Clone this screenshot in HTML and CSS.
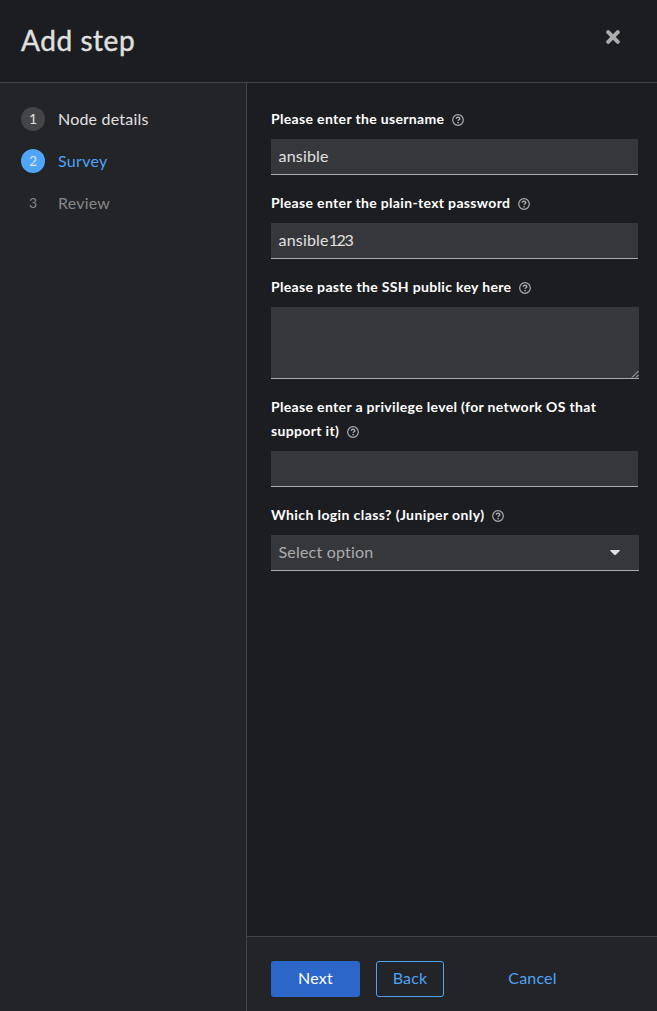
FILE: index.html
```html
<!DOCTYPE html>
<html lang="en">
<head>
<meta charset="utf-8">
<title>Add step</title>
<link rel="stylesheet" href="styles.css">
</head>
<body>
<svg class="defs" width="0" height="0" aria-hidden="true">
  <symbol id="help" viewBox="0 0 12 12">
    <circle cx="6" cy="6" r="5.3" fill="none" stroke="currentColor" stroke-width="1.2"/>
    <path d="M4.2 4.8C4.3 3.7 5.1 3.3 6 3.3c1 0 1.8.5 1.8 1.4C7.8 5.8 6.2 5.7 6.1 6.9" fill="none" stroke="currentColor" stroke-width="1.4"/>
    <circle cx="6.1" cy="8.6" r=".85" fill="currentColor"/>
  </symbol>
</svg>
<div class="wizard">
  <header class="header">
    <h1 class="title">Add step</h1>
    <button class="close" aria-label="Close"><svg width="14" height="14" viewBox="0 0 14 14"><path d="M2.2 2.2l9.6 9.6M11.8 2.2l-9.6 9.6" stroke="currentColor" stroke-width="4" stroke-linecap="round"/></svg></button>
  </header>
  <div class="body">
    <nav class="nav">
      <div class="step"><span class="num num-done">1</span><span>Node details</span></div>
      <div class="step step-current"><span class="num num-current">2</span><span>Survey</span></div>
      <div class="step step-disabled"><span class="num">3</span><span>Review</span></div>
    </nav>
    <div class="content">
      <form class="form">
        <div class="group">
          <label class="label"><span>Please enter the username</span><svg class="help"><use href="#help"/></svg></label>
          <div class="control input">ansible</div>
        </div>
        <div class="group">
          <label class="label"><span>Please enter the plain-text password</span><svg class="help"><use href="#help"/></svg></label>
          <div class="control input">ansible<span class="digits">123</span></div>
        </div>
        <div class="group">
          <label class="label"><span>Please paste the SSH public key here</span><svg class="help"><use href="#help"/></svg></label>
          <div class="control area"><svg class="grip" width="8" height="8" viewBox="0 0 8 8"><path d="M1 7.5L7.5 1M5 7.5L7.5 5" stroke="currentColor"/></svg></div>
        </div>
        <div class="group">
          <label class="label"><span>Please enter a privilege level (for network OS that<br>support it)</span><svg class="help"><use href="#help"/></svg></label>
          <div class="control input"></div>
        </div>
        <div class="group">
          <label class="label"><span class="label-class">Which login class? (Juniper only)</span><svg class="help"><use href="#help"/></svg></label>
          <div class="control select"><span>Select option</span><svg width="10" height="6" viewBox="0 0 10 6"><path d="M.8 0h8.4q1.1 0 .4.9L5.8 4.7q-.8.7-1.6 0L.4.9Q-.3 0 .8 0z" fill="currentColor"/></svg></div>
        </div>
      </form>
      <footer class="footer">
        <button class="btn next">Next</button>
        <button class="btn back">Back</button>
        <button class="btn cancel">Cancel</button>
      </footer>
    </div>
  </div>
</div>
</body>
</html>
```
FILE: styles.css
```css
* { box-sizing: border-box; }
body { margin: 0; background: #1c1d21; color: #e0e0e0; font: 16px/24px Lato, "Open Sans", sans-serif; }
button { border: 0; padding: 0; background: none; color: inherit; font: inherit; }
.defs { display: block; height: 0; }
.wizard { display: flex; flex-direction: column; width: 657px; height: 1011px; overflow: hidden; }
.header { display: flex; justify-content: space-between; align-items: flex-start; height: 83px; padding: 22px 37px 0 21px; border-bottom: 1px solid #444548; }
.title { margin: 0; font-size: 28px; line-height: 36px; font-weight: 400; letter-spacing: .55px; -webkit-text-stroke: .4px; }
.close { display: block; height: 14px; margin-top: 8px; color: #aaabac; }
.close svg { display: block; }
.body { display: flex; flex: 1; }
.nav { display: flex; flex-direction: column; gap: 18px; width: 247px; padding: 24px 21px; background: #232428; border-right: 1px solid #444548; }
.step { display: flex; align-items: center; gap: 13px; height: 24px; letter-spacing: .2px; }
.step-current { color: #4fa3f3; letter-spacing: .3px; }
.step-disabled { color: #868789; }
.num { width: 24px; height: 24px; border-radius: 50%; text-align: center; font-size: 14px; letter-spacing: 0; }
.num-done { background: #444548; }
.num-current { background: #4fa5f8; color: #e0e0e0; }
.content { display: flex; flex: 1; flex-direction: column; }
.form { display: flex; flex: 1; flex-direction: column; gap: 16px; padding: 24px 18px 0 24px; }
.label { display: block; padding-bottom: 8px; color: #fff; font-size: 14px; font-weight: 700; letter-spacing: .34px; white-space: nowrap; }
.label-class { letter-spacing: .4px; }
.help { width: 12px; height: 12px; margin-left: 8px; vertical-align: -2px; color: #aaabac; }
.control { height: 36px; padding: 5px 7.5px 6px; background: #36373a; border-bottom: 1px solid #aaabac; letter-spacing: .2px; }
.input { margin-right: 1px; }
.digits { letter-spacing: -1.4px; }
.area { display: flex; justify-content: flex-end; align-items: flex-end; height: 72px; padding: 0; color: #c4c4c4; }
.select { display: flex; justify-content: space-between; align-items: center; padding-right: 19px; color: #aaabac; }
.select svg { margin-top: 1px; color: #e0e0e0; }
.footer { display: flex; height: 75px; padding: 24px; background: #232428; border-top: 1px solid #444548; }
.btn { height: 36px; padding-bottom: 2px; border-radius: 3px; letter-spacing: .2px; }
.next { width: 89px; margin-right: 16px; background: #2b66c8; color: #fff; }
.back { width: 68px; border: 1px solid #4fa3f3; color: #4fa3f3; }
.cancel { width: 81px; margin-left: 48px; color: #4fa3f3; }
```
